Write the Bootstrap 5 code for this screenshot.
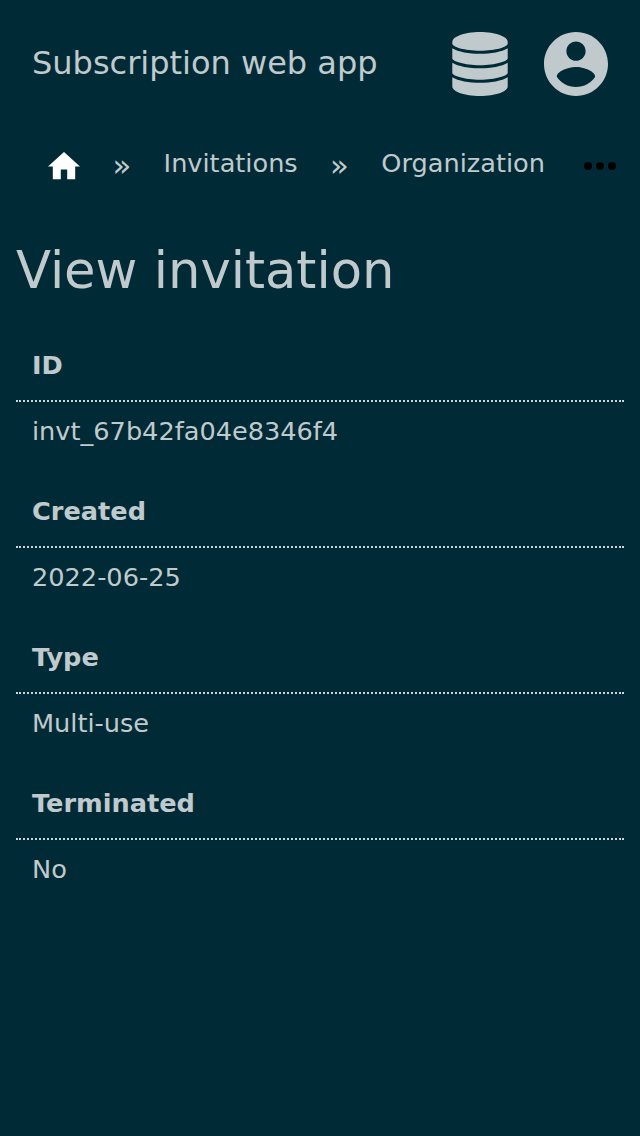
<!DOCTYPE html>
<html lang="en">
<head>
<meta charset="utf-8">
<meta name="viewport" content="width=device-width, initial-scale=1">
<title>View invitation</title>
<link href="https://cdn.jsdelivr.net/npm/bootstrap@5.3.0/dist/css/bootstrap.min.css" rel="stylesheet">
<style>
body{background:#002b36;color:#c0cacd;font-family:"DejaVu Sans",sans-serif;font-size:25.6px;line-height:30px;min-height:100vh}
svg{display:block;fill:currentColor}
.topbar{height:128px;padding:0 32px}
.brand{font-size:32px;line-height:38px;padding-bottom:2px}
.tools{gap:36px}
.crumbs{height:76px;padding:0 24px 0 48px}
.crumbs a{color:inherit;text-decoration:none}
.crumbs .step{padding-bottom:6px}
.crumbs .home{color:#fff}
.crumbs .more{color:#000}
.sep{width:83.6px;text-align:center;font-size:30.72px;padding-bottom:2px}
.title{font-size:51.2px;line-height:60px;font-weight:400;margin:36px 0 0}
.fields{margin:31px 0 0}
.fields dt{border-bottom:2px dotted #ccd5d7;padding:19px 16px 20px}
.fields dd{padding:14px 16px 31px;margin:0}
</style>
</head>
<body>
<header class="topbar d-flex align-items-center justify-content-between">
  <span class="brand">Subscription web app</span>
  <div class="tools d-flex">
    <svg width="56" height="64" viewBox="0 0 56 64"><path d="M.3 10C.3 4.500 12.500 0 28 0s27.700 4.500 27.700 10v1.500c0 3.500-12.200 7.200-27.700 7.200S.3 15 .3 11.500z"/><path id="disk" d="M.3 16.300C6 20 17 21.800 28 21.800s22-1.800 27.700-5.500V26.500c0 2.700-12.200 6.700-27.700 6.700S.3 29.200.3 26.500z"/><use href="#disk" y="14.500"/><path d="M.3 45.300C6 49 17 50.800 28 50.800s22-1.800 27.700-5.500V54.500C55.700 59.500 43.500 64 28 64S.3 59.500.3 54.500z"/></svg>
    <svg width="64" height="64" viewBox="2 2 20 20"><path d="M12 2C6.480 2 2 6.480 2 12s4.480 10 10 10 10-4.480 10-10S17.520 2 12 2zm0 3c1.660 0 3 1.340 3 3s-1.340 3-3 3-3-1.340-3-3 1.340-3 3-3zm0 14.200c-2.500 0-4.710-1.280-6-3.220.03-1.990 4-3.080 6-3.080s5.970 1.090 6 3.080c-1.290 1.940-3.500 3.220-6 3.220z"/></svg>
  </div>
</header>
<nav class="crumbs d-flex align-items-center text-nowrap" aria-label="Breadcrumb">
  <a class="home" href="#"><svg width="32" height="27.200" viewBox="2 3 20 17"><path d="M10 20v-6h4v6h5v-8h3L12 3 2 12h3v8z"/></svg></a>
  <span class="sep">»</span>
  <a class="step" href="#">Invitations</a>
  <span class="sep">»</span>
  <a class="step" href="#">Organization</a>
  <a class="more ms-auto" href="#"><svg width="32" height="8" viewBox="0 0 32 8"><circle cx="4" cy="4" r="4"/><circle cx="16" cy="4" r="4"/><circle cx="28" cy="4" r="4"/></svg></a>
</nav>
<main class="px-3">
  <h1 class="title">View invitation</h1>
  <dl class="fields">
    <dt>ID</dt><dd>invt_67b42fa04e8346f4</dd>
    <dt>Created</dt><dd>2022-06-25</dd>
    <dt>Type</dt><dd>Multi-use</dd>
    <dt>Terminated</dt><dd>No</dd>
  </dl>
</main>
<script src="https://cdn.jsdelivr.net/npm/bootstrap@5.3.0/dist/js/bootstrap.bundle.min.js"></script>
</body>
</html>
